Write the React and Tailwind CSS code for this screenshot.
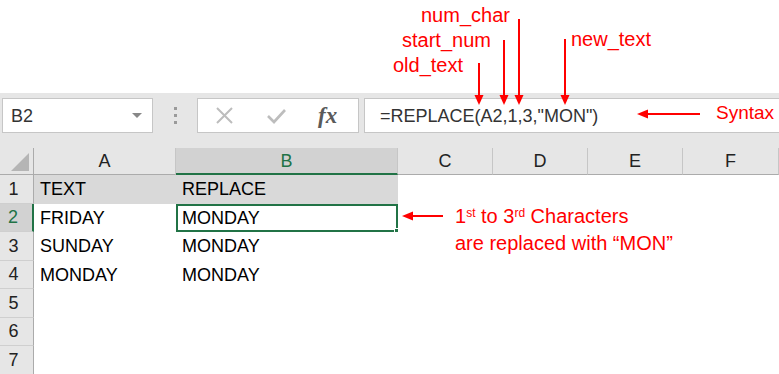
import React from "react";

const COLS = [
  { key: "A", w: "w-[142px]" },
  { key: "B", w: "w-[222px]" },
  { key: "C", w: "w-[95px]" },
  { key: "D", w: "w-[95px]" },
  { key: "E", w: "w-[95px]" },
  { key: "F", w: "w-[96px]" },
];

const ROWS = [
  ["TEXT", "REPLACE"],
  ["FRIDAY", "MONDAY"],
  ["SUNDAY", "MONDAY"],
  ["MONDAY", "MONDAY"],
  ["", ""],
  ["", ""],
  ["", ""],
];

// red callout arrows drawn over the sheet
const Arrows = () => (
  <svg
    className="absolute inset-0 pointer-events-none"
    width="779"
    height="374"
    viewBox="0 0 779 374"
  >
    <g stroke="#ff0000" strokeWidth="2" fill="none">
      <line x1="479" y1="63" x2="479" y2="97" />
      <line x1="504" y1="40" x2="504" y2="97" />
      <line x1="519" y1="19" x2="519" y2="97" />
      <line x1="565" y1="39" x2="565" y2="97" />
      <line x1="700" y1="114" x2="646" y2="114" />
      <line x1="443" y1="216" x2="411" y2="216" />
    </g>
    <g fill="#ff0000">
      <polygon points="474.5,95 483.5,95 479,105" />
      <polygon points="499.5,95 508.5,95 504,105" />
      <polygon points="514.5,95 523.5,95 519,105" />
      <polygon points="560.5,95 569.5,95 565,105" />
      <polygon points="648,109.5 648,118.5 637,114" />
      <polygon points="413,211.5 413,220.5 402,216" />
    </g>
  </svg>
);

const Label = ({ className, children }) => (
  <div
    className={`absolute leading-[22px] text-[#ff0000] whitespace-nowrap ${className}`}
  >
    {children}
  </div>
);

const FormulaBar = () => (
  <div className="h-[55px] bg-[#e6e6e6] pt-[5px] flex items-start">
    {/* NAME BOX */}
    <div className="ml-[2px] w-[151px] h-[35px] bg-white border border-[#c6c6c6] flex items-center justify-between pl-[8px] pr-[10px]">
      <span className="text-[18px] leading-[20px] text-[#333]">B2</span>
      <svg width="10" height="6" viewBox="0 0 10 6">
        <polygon points="0,0 10,0 5,5" fill="#888" />
      </svg>
    </div>

    {/* GRIP DOTS */}
    <div className="w-[44px] h-[35px] flex flex-col items-center justify-center gap-[4px]">
      <div className="w-[3px] h-[3px] bg-[#9a9a9a]" />
      <div className="w-[3px] h-[3px] bg-[#9a9a9a]" />
      <div className="w-[3px] h-[3px] bg-[#9a9a9a]" />
    </div>

    {/* CANCEL / ENTER / FX */}
    <div className="w-[162px] h-[35px] bg-white border border-[#c6c6c6] flex items-center">
      <svg className="ml-[18px]" width="17" height="17" viewBox="0 0 17 17">
        <path d="M1 1 L16 16 M16 1 L1 16" stroke="#bdbdbd" strokeWidth="2" />
      </svg>
      <svg className="ml-[34px]" width="19" height="16" viewBox="0 0 19 16">
        <path d="M1 8 L7 14 L18 2" stroke="#bdbdbd" strokeWidth="2.6" fill="none" />
      </svg>
      <span className="ml-[32px] text-[23px] leading-[22px] italic font-bold text-[#5a5a5a] font-['Liberation_Serif',serif]">
        fx
      </span>
    </div>

    {/* FORMULA */}
    <div className="ml-[5px] flex-1 h-[35px] bg-white border-y border-l border-[#c6c6c6] flex items-center pl-[15px]">
      <span className="text-[18px] leading-[20px] text-[#333]">
        =REPLACE(A2,1,3,"MON")
      </span>
    </div>
  </div>
);

const HeaderRow = () => (
  <div className="flex h-[27px] bg-[#e6e6e6]">
    <div className="w-[34px] h-full border-r border-b border-[#ababab] flex items-end justify-end pr-[4px] pb-[3px]">
      <svg width="18" height="18" viewBox="0 0 18 18">
        <polygon points="18,0 18,18 0,18" fill="#b5b5b5" />
      </svg>
    </div>
    {COLS.map((c) => {
      const sel = c.key === "B";
      return (
        <div
          key={c.key}
          className={`${c.w} h-full flex items-center justify-center text-[18px] leading-[20px] ${
            sel
              ? "bg-[#d2d2d2] text-[#217346] border-b-2 border-[#217346] border-r border-r-[#c6c6c6]"
              : "text-[#222] border-b border-[#ababab] border-r border-r-[#c6c6c6]"
          }`}
        >
          {c.key}
        </div>
      );
    })}
  </div>
);

const SheetRow = ({ n, cells }) => {
  const sel = n === 2;
  return (
    <div className="flex h-[28.5px]">
      <div
        className={`w-[34px] h-full flex items-center justify-center pr-[6px] text-[18px] leading-[20px] border-b border-b-[#cfcfcf] ${
          sel
            ? "bg-[#d2d2d2] text-[#217346] border-r-2 border-r-[#217346]"
            : "bg-[#e6e6e6] text-[#222] border-r border-r-[#ababab]"
        }`}
      >
        {n}
      </div>
      {COLS.map((c, i) => {
        const fill = n === 1 && i < 2 ? "bg-[#d9d9d9]" : "bg-white";
        const isSel = sel && c.key === "B";
        return (
          <div
            key={c.key}
            className={`${c.w} h-full relative flex items-center text-[18px] leading-[20px] text-black ${fill} ${
              isSel ? "border-2 border-[#217346] px-[4px]" : "px-[6px]"
            }`}
          >
            {cells[i] || ""}
            {isSel && (
              <div className="absolute -right-[5px] -bottom-[5px] w-[7px] h-[7px] bg-[#217346] border border-white" />
            )}
          </div>
        );
      })}
    </div>
  );
};

export default function App() {
  return (
    <div className="relative w-[779px] h-[374px] overflow-hidden bg-white font-['Liberation_Sans',Arial,sans-serif]">
      {/* ANNOTATION SPACE */}
      <div className="h-[93px]" />

      <FormulaBar />
      <HeaderRow />
      {ROWS.map((r, i) => (
        <SheetRow key={i} n={i + 1} cells={[r[0], r[1]]} />
      ))}

      {/* CALLOUTS */}
      <Arrows />
      <Label className="left-[421px] top-[4px] text-[20px]">num_char</Label>
      <Label className="left-[402px] top-[29px] text-[20px]">start_num</Label>
      <Label className="left-[393px] top-[54px] text-[20px]">old_text</Label>
      <Label className="left-[571px] top-[28px] text-[20px]">new_text</Label>
      <Label className="left-[716px] top-[102px] text-[19px]">Syntax</Label>
      <Label className="left-[455px] top-[205px] text-[20px]">
        1<sup className="text-[12px]">st</sup> to 3<sup className="text-[12px]">rd</sup> Characters
      </Label>
      <Label className="left-[455px] top-[232px] text-[20px]">are replaced with “MON”</Label>
    </div>
  );
}
